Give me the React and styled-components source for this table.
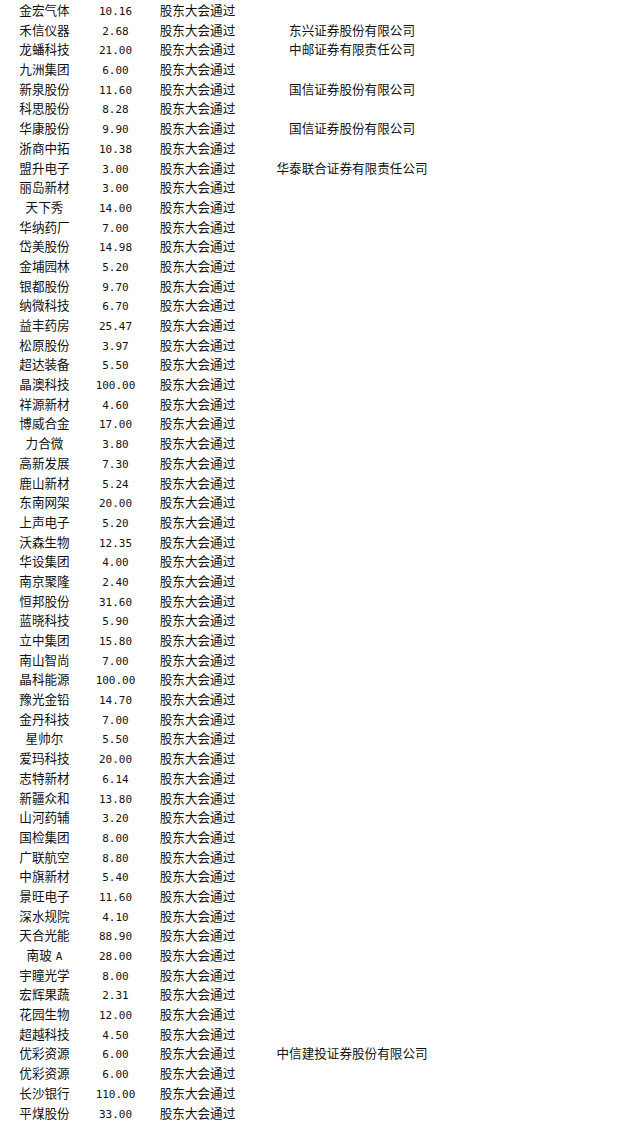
import React from 'react'
import styled, { createGlobalStyle } from 'styled-components'

const GlobalStyle = createGlobalStyle`
  html, body {
    margin: 0;
    padding: 0;
    background: #fff;
  }
`

const rows = [
  ['金宏气体', '10.16'],
  ['禾信仪器', '2.68', '东兴证券股份有限公司'],
  ['龙蟠科技', '21.00', '中邮证券有限责任公司'],
  ['九洲集团', '6.00'],
  ['新泉股份', '11.60', '国信证券股份有限公司'],
  ['科思股份', '8.28'],
  ['华康股份', '9.90', '国信证券股份有限公司'],
  ['浙商中拓', '10.38'],
  ['盟升电子', '3.00', '华泰联合证券有限责任公司'],
  ['丽岛新材', '3.00'],
  ['天下秀', '14.00'],
  ['华纳药厂', '7.00'],
  ['岱美股份', '14.98'],
  ['金埔园林', '5.20'],
  ['银都股份', '9.70'],
  ['纳微科技', '6.70'],
  ['益丰药房', '25.47'],
  ['松原股份', '3.97'],
  ['超达装备', '5.50'],
  ['晶澳科技', '100.00'],
  ['祥源新材', '4.60'],
  ['博威合金', '17.00'],
  ['力合微', '3.80'],
  ['高新发展', '7.30'],
  ['鹿山新材', '5.24'],
  ['东南网架', '20.00'],
  ['上声电子', '5.20'],
  ['沃森生物', '12.35'],
  ['华设集团', '4.00'],
  ['南京聚隆', '2.40'],
  ['恒邦股份', '31.60'],
  ['蓝晓科技', '5.90'],
  ['立中集团', '15.80'],
  ['南山智尚', '7.00'],
  ['晶科能源', '100.00'],
  ['豫光金铅', '14.70'],
  ['金丹科技', '7.00'],
  ['星帅尔', '5.50'],
  ['爱玛科技', '20.00'],
  ['志特新材', '6.14'],
  ['新疆众和', '13.80'],
  ['山河药辅', '3.20'],
  ['国检集团', '8.00'],
  ['广联航空', '8.80'],
  ['中旗新材', '5.40'],
  ['景旺电子', '11.60'],
  ['深水规院', '4.10'],
  ['天合光能', '88.90'],
  ['南玻A', '28.00'],
  ['宇瞳光学', '8.00'],
  ['宏辉果蔬', '2.31'],
  ['花园生物', '12.00'],
  ['超越科技', '4.50'],
  ['优彩资源', '6.00', '中信建投证券股份有限公司'],
  ['优彩资源', '6.00'],
  ['长沙银行', '110.00'],
  ['平煤股份', '33.00'],
]

const Table = styled.div`
  display: flex;
  flex-direction: column;
  color: #111;
  font-family: "Noto Sans CJK SC", sans-serif;
  font-size: 12.6px;
`

const Row = styled.div`
  display: grid;
  grid-template-columns: 89px 53px 111px 198px;
  align-items: baseline;
  height: 19.7px;
  line-height: 19.7px;
`

const Cell = styled.div`
  text-align: center;
  white-space: nowrap;
`

const Num = styled(Cell)`
  font-family: "DejaVu Sans Mono", monospace;
  font-size: 11px;
`

const Latin = styled.span`
  font-family: "DejaVu Sans Mono", monospace;
  font-size: 11px;
  padding-left: 4px;
`

function Name({ text }) {
  const m = text.match(/^(.*?)([A-Z]+)$/)
  if (!m) return <Cell>{text}</Cell>
  return (
    <Cell>
      {m[1]}
      <Latin>{m[2]}</Latin>
    </Cell>
  )
}

export default function App() {
  return (
    <>
      <GlobalStyle />
      <Table>
        {rows.map(([name, amount, broker], i) => (
          <Row key={i}>
            <Name text={name} />
            <Num>{amount}</Num>
            <Cell>股东大会通过</Cell>
            <Cell>{broker || ''}</Cell>
          </Row>
        ))}
      </Table>
    </>
  )
}
